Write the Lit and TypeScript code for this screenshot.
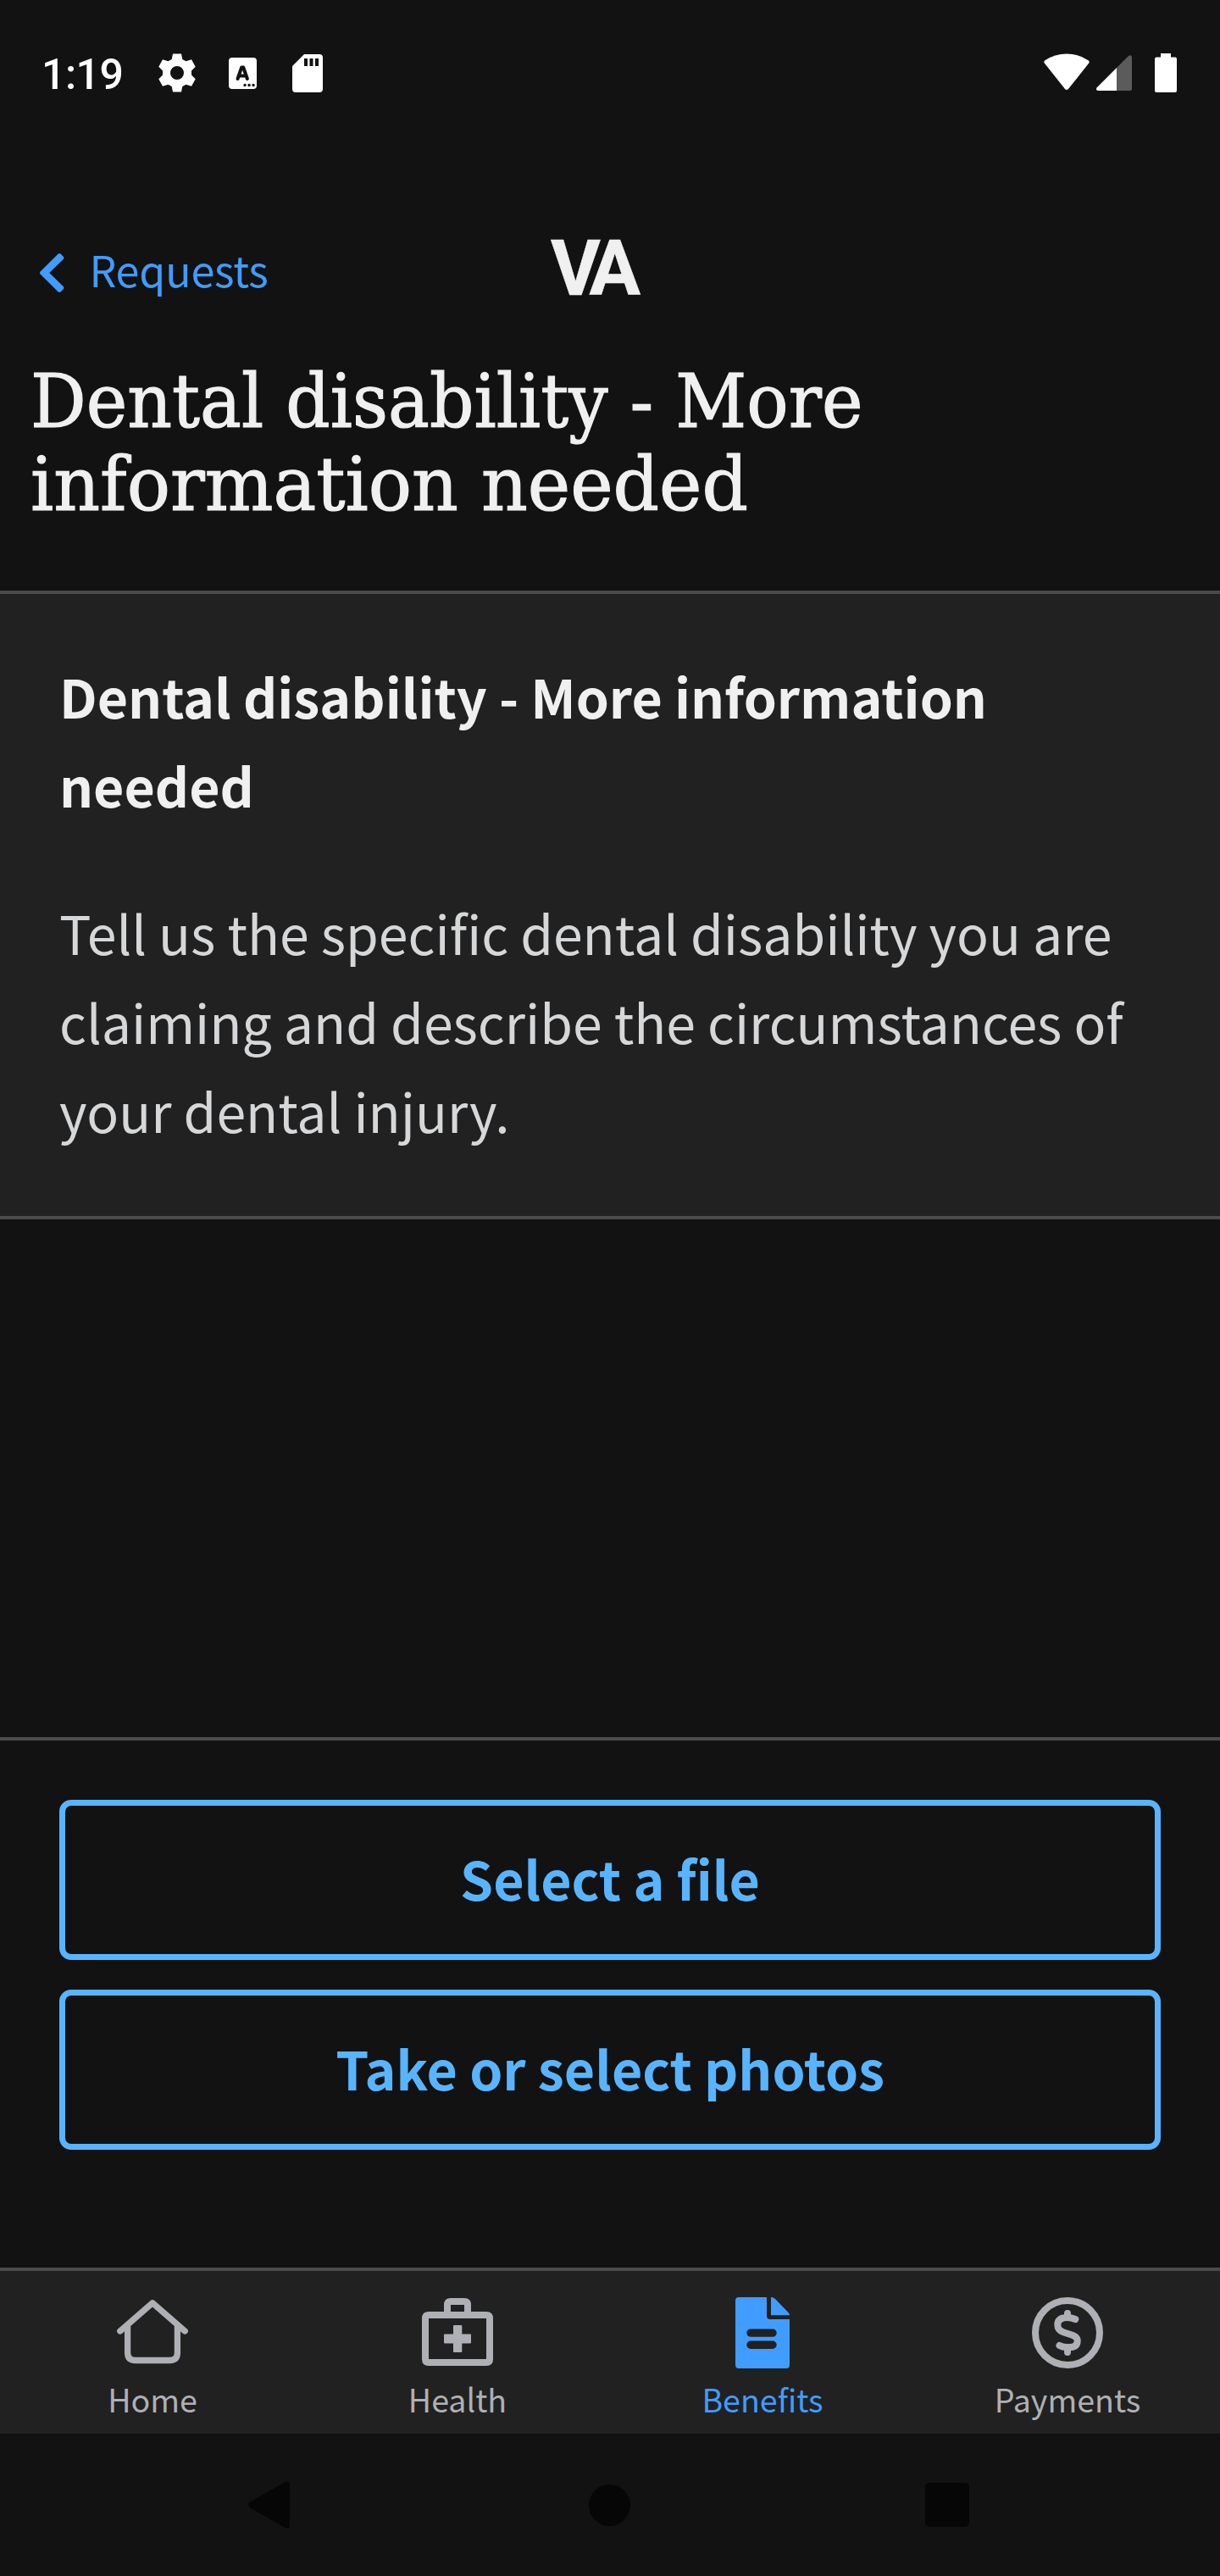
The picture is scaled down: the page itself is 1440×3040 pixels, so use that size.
import { LitElement, html, css } from "lit";
import { customElement } from "lit/decorators.js";

@customElement("app-root")
export class AppRoot extends LitElement {
  static styles = css`
    :host {
      display: flex;
      flex-direction: column;
      width: 1440px;
      height: 3040px;
      background: #121212;
      color: #f0f0f0;
      font-family: "Noto Sans CJK SC", "Source Sans Pro", sans-serif;
      overflow: hidden;
    }
    * { box-sizing: border-box; }
    svg { display: block; flex: none; fill: currentColor; }
    .status {
      height: 172px;
      flex: none;
      display: flex;
      align-items: center;
      padding: 0 51px 0 49px;
      color: #fff;
    }
    .time {
      font: 500 50px/50px Roboto, sans-serif;
      letter-spacing: -0.5px;
      width: 138px;
      padding-top: 3px;
    }
    .gear { margin-right: 39px; }
    .abox { margin-right: 42px; }
    .wifi { margin-left: auto; margin-right: 8px; }
    .signal { margin-right: 27px; }
    .header {
      height: 216px;
      flex: none;
      display: flex;
      align-items: center;
      padding: 83px 44px 0 47px;
    }
    .back {
      display: flex;
      align-items: center;
      gap: 28.5px;
      width: 603px;
      color: #409cff;
      font-size: 50.2px;
      letter-spacing: -0.2px;
      line-height: 60px;
      height: 60px;
    }
    .back span { padding-bottom: 9px; }
    .logo {
      font: 700 90px/90px Roboto, sans-serif;
      letter-spacing: -10px;
      -webkit-text-stroke: 0.6px currentColor;
      margin-bottom: 8px;
    }
    .title {
      margin: 0;
      height: 309px;
      flex: none;
      padding: 37px 36px 0;
      font: 400 88px/98px "DejaVu Serif", serif;
      -webkit-text-stroke: 1.2px currentColor;
    }
    .title span { display: block; white-space: nowrap; transform-origin: 0 0; }
    .line-one { transform: scaleX(0.932); }
    .line-two { transform: scaleX(0.968); }
    .panel {
      flex: none;
      height: 742px;
      background: #212121;
      border-top: 4px solid #4b4b4b;
      border-bottom: 4px solid #4b4b4b;
      padding: 67px 70px 0;
      font-size: 62.6px;
      line-height: 105px;
    }
    .panel h2 { margin: 0; font-size: inherit; font-weight: 700; line-height: 105px; }
    .panel p { margin: 69px 0 0; color: #d6d7d9; }
    .spacer { flex: 1; }
    .actions {
      flex: none;
      height: 626px;
      border-top: 4px solid #4b4b4b;
      padding: 70px 70px 0;
      display: flex;
      flex-direction: column;
      gap: 35px;
    }
    .btn {
      height: 189px;
      border: 7px solid #58b4ff;
      border-radius: 14px;
      background: none;
      color: #58b4ff;
      font: 700 62.6px/105px "Noto Sans CJK SC", sans-serif;
      padding: 0 0 6px;
    }
    .tabs {
      flex: none;
      height: 196px;
      background: #212121;
      border-top: 4px solid #4b4b4b;
      display: grid;
      grid-template-columns: repeat(4, 1fr);
    }
    .tab {
      display: flex;
      flex-direction: column;
      align-items: center;
      padding-top: 31px;
      color: #aeb0b5;
      font-size: 37.6px;
      line-height: 54px;
    }
    .tab svg { margin-bottom: 8.6px; }
    .active { color: #409cff; }
    .nav {
      flex: none;
      height: 168px;
      color: #060606;
      display: flex;
      align-items: center;
      justify-content: space-between;
      padding: 0 296px 0 293px;
    }
    .home-dot { margin-left: 4px; }
  `;

  render() {
    return html`
      <div class="status">
        <span class="time">1:19</span>
        <svg class="gear" width="44" height="46" viewBox="-22 -23 44 46">
          <path fill-rule="evenodd" d="M-5-22.5H5L6.3-16 10.5-13.7 17-15.7 21.7-7.2 17-2.5V2.5L21.7 7.2 17 15.7 10.5 13.7 6.3 16 5 22.5H-5L-6.3 16-10.5 13.7-17 15.7-21.7 7.2-17 2.5V-2.5L-21.7-7.2-17-15.7-10.5-13.7-6.3-16ZM0-8A8 8 0 1 0 0 8 8 8 0 1 0 0-8Z"/>
        </svg>
        <svg class="abox" width="33" height="37" viewBox="0 0 33 37">
          <rect width="33" height="37" rx="4"/>
          <path d="M10.500 25 15.200 11.500h2L21.900 25M12.500 21.500h7.500" fill="none" stroke="#121212" stroke-width="4" stroke-linecap="round" stroke-linejoin="round"/>
          <path d="M19 32.500h.1M24 32.500h.1M29 32.500h.1" stroke="#121212" stroke-width="3.400" stroke-linecap="round"/>
        </svg>
        <svg width="36" height="45" viewBox="0 0 36 45">
          <path fill-rule="evenodd" d="M14 0H32a4 4 0 0 1 4 4V41a4 4 0 0 1-4 4H4a4 4 0 0 1-4-4V14ZM14 5v9h4V5ZM20.500 5v9h4V5ZM27 5v9h4V5Z"/>
        </svg>
        <svg class="wifi" width="54" height="46" viewBox="0 0 54 46">
          <path d="M.8 11.500Q-.4 9.500 1.500 8.200 13 .5 27 .5T52.500 8.200Q54.400 9.500 53.200 11.500L29 42q-2 2.200-4 0Z"/>
        </svg>
        <svg class="signal" width="42" height="42" viewBox="0 0 42 42">
          <path d="M24 15V42H2Q-.800 41.500.5 38.500Z"/>
          <path fill="#5b5b5b" d="M24 15 38 1q3.500-2 4 1.500V40q0 2-2 2H24Z"/>
        </svg>
        <svg width="26" height="46" viewBox="0 0 26 46">
          <path d="M7 0H19V4.500H24a2 2 0 0 1 2 2V44a2 2 0 0 1-2 2H2a2 2 0 0 1-2-2V6.500a2 2 0 0 1 2-2H7Z"/>
        </svg>
      </div>
      <div class="header">
        <div class="back">
          <svg width="30" height="46" viewBox="0 0 30 46">
            <path d="M0 23Q0 22 .8 21.200L21.500.8Q23.200-.8 24.800.8L27.700 3.700Q29.200 5.200 27.700 6.900L11.300 23 27.700 39.100Q29.200 40.800 27.700 42.300L24.800 45.200Q23.200 46.800 21.500 45.200L.8 24.800Q0 24 0 23Z"/>
          </svg>
          <span>Requests</span>
        </div>
        <div class="logo">VA</div>
      </div>
      <h1 class="title"><span class="line-one">Dental disability - More</span><span class="line-two">information needed</span></h1>
      <section class="panel">
        <h2>Dental disability - More information needed</h2>
        <p>Tell us the specific dental disability you are claiming and describe the circumstances of your dental injury.</p>
      </section>
      <div class="spacer"></div>
      <div class="actions">
        <button class="btn">Select a file</button>
        <button class="btn">Take or select photos</button>
      </div>
      <nav class="tabs">
        <div class="tab">
          <svg width="84" height="84" viewBox="0 0 84 84">
            <path d="M3.800 40 42 6.800 80.200 40M12.600 34V65.500q0 9 9 9H62.400q9 0 9-9V34" fill="none" stroke="currentColor" stroke-width="7.300" stroke-linecap="round" stroke-linejoin="round"/>
          </svg>
          <span>Home</span>
        </div>
        <div class="tab">
          <svg width="84" height="84" viewBox="0 0 84 84">
            <path d="M8 21H76q4 0 4 4V73q0 4-4 4H8q-4 0-4-4V25q0-4 4-4ZM30 21V9q0-4 4-4H50q4 0 4 4V21" fill="none" stroke="currentColor" stroke-width="8"/>
            <path d="M38 33H46.300q1 0 1 1V43.500H57q1 0 1 1V53.500q0 1-1 1H47.300V64q0 1-1 1H38q-1 0-1-1V54.500H27q-1 0-1-1V44.500q0-1 1-1H37V34q0-1 1-1Z"/>
          </svg>
          <span>Health</span>
        </div>
        <div class="tab active">
          <svg width="64" height="84" viewBox="0 0 64 84">
            <path fill-rule="evenodd" d="M4 0H37V22q0 4 4 4H64V80q0 4-4 4H4q-4 0-4-4V4Q0 0 4 0ZM18 37.400a4.700 4.700 0 0 0 0 9.400H44a4.700 4.700 0 0 0 0-9.400ZM18 51.500a4.700 4.700 0 0 0 0 9.400H44a4.700 4.700 0 0 0 0-9.400Z"/>
            <path d="M42 0q3 0 5 2L62 17.500Q64 19.500 64 21.300H42Z"/>
          </svg>
          <span>Benefits</span>
        </div>
        <div class="tab">
          <svg width="84" height="84" viewBox="0 0 84 84">
            <circle cx="42" cy="42" r="38" fill="none" stroke="currentColor" stroke-width="8"/>
            <path d="M42 19V24M42 59V65M51.300 26Q46.500 24 42 24 30.300 24 30.300 32.500 30.300 39 37 41.200L47 44.500Q53.700 46.800 53.700 51.500 53.700 59 44.500 59H41Q36 59 32.500 57" fill="none" stroke="currentColor" stroke-width="8" stroke-linecap="round"/>
          </svg>
          <span>Payments</span>
        </div>
      </nav>
      <div class="nav">
        <svg width="49" height="56" viewBox="0 0 49 56"><path d="M1.500 25 44 .8Q49-.5 49 4V52Q49 56.500 44 55.200L1.500 31Q-1.500 28 1.500 25Z"/></svg>
        <svg class="home-dot" width="49" height="49" viewBox="0 0 49 49"><circle cx="24.500" cy="24.500" r="24.500"/></svg>
        <svg width="52" height="52" viewBox="0 0 52 52"><rect width="52" height="52" rx="5"/></svg>
      </div>
    `;
  }
}
